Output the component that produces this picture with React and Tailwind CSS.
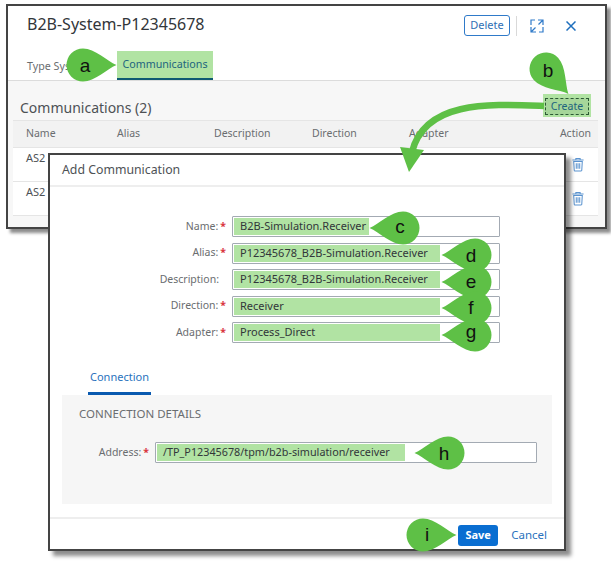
const FONT = { fontFamily: '"Noto Sans", "Open Sans", sans-serif' };

const fields = [
  { label: 'Name:', value: 'B2B-Simulation.Receiver', mark: 'w-[135px]', required: true },
  { label: 'Alias:', value: 'P12345678_B2B-Simulation.Receiver', mark: 'w-[206px]', required: true },
  { label: 'Description:', value: 'P12345678_B2B-Simulation.Receiver', mark: 'w-[206px]', required: false },
  { label: 'Direction:', value: 'Receiver', mark: 'w-[206px]', required: true },
  { label: 'Adapter:', value: 'Process_Direct', mark: 'w-[206px]', required: true },
];

// callout teardrops, tip points at local -x before rotating
const callouts = [
  { letter: 'a', x: 83, y: 65, r: 180, tx: 85, ty: 72 },
  { letter: 'b', x: 546, y: 69, r: -132, tx: 548, ty: 77 },
  { letter: 'c', x: 403, y: 228, r: 0, tx: 400, ty: 233 },
  { letter: 'd', x: 475, y: 255, r: 0, tx: 471, ty: 262 },
  { letter: 'e', x: 475, y: 282, r: 0, tx: 471, ty: 288 },
  { letter: 'f', x: 475, y: 308, r: 0, tx: 471, ty: 314 },
  { letter: 'g', x: 475, y: 335, r: 0, tx: 471, ty: 338 },
  { letter: 'h', x: 448, y: 453, r: 0, tx: 444, ty: 460 },
  { letter: 'i', x: 423, y: 535, r: 180, tx: 427, ty: 541 },
];

function TrashIcon() {
  return (
    <svg width="12" height="15" viewBox="0 0 14 16" fill="none" stroke="#5b93cf" strokeWidth="1.2">
      <path d="M0.5 2.8h13M4.5 2.5V1h5v1.5" />
      <path d="M2 4.5h10l-.6 10.2a.8.8 0 0 1-.8.8H3.4a.8.8 0 0 1-.8-.8z" />
      <path d="M5 6.5v6.5M7 6.5v6.5M9 6.5v6.5" />
    </svg>
  );
}

function FullscreenIcon() {
  return (
    <svg width="14" height="14" viewBox="0 0 14 14" fill="none" stroke="#2f7ac9" strokeWidth="1.2">
      <path d="M5 1H1v5M9 13h4V8" />
      <path d="M8 1h5v5M13 1L8.5 5.5M1 8v5h5M1 13l4.5-4.5" />
    </svg>
  );
}

function Annotations() {
  return (
    <svg className="absolute left-0 top-0 pointer-events-none" width="611" height="564" viewBox="0 0 611 564">
      <path d="M544 106C490 104 425 100 412 152" fill="none" stroke="#5ec046" strokeWidth="6.5" />
      <path d="M400 147L424 150L409 172Z" fill="#5ec046" />
      {callouts.map(c => (
        <g key={c.letter}>
          <path
            transform={`translate(${c.x} ${c.y}) rotate(${c.r})`}
            d="M-33.5 0C-24-4-12-16.5 0-16.5A16.5 16.5 0 1 1 0 16.5C-12 16.5-24 4-33.5 0Z"
            fill="#5ec046"
          />
          <text x={c.tx} y={c.ty} textAnchor="middle" fontSize="19" fill="#111" fontFamily="Liberation Sans, sans-serif">{c.letter}</text>
        </g>
      ))}
    </svg>
  );
}

function BackWindow() {
  return (
    <div className="absolute left-[6px] top-[4px] w-[601px] h-[225px] border-2 border-[#444] bg-white flex flex-col shadow-[4px_4px_3px_rgba(0,0,0,0.45)]">
      <div className="h-[75px] shrink-0 flex flex-col border-b border-[#dcdcdc]">
        <div className="h-[40px] pl-[19px] pr-[29px] flex items-center justify-between">
          <span className="text-[16px] text-[#32363a] mb-[4px]">B2B-System-P12345678</span>
          <div className="flex items-center mb-[1px]">
            <button className="w-[46px] h-[21px] border border-[#2f7ac9] rounded-[3px] text-[11px] text-[#2f6fb5]">Delete</button>
            <div className="w-px h-[20px] bg-[#d9d9d9] ml-[6px] mr-[13px]" />
            <FullscreenIcon />
            <span className="ml-[22px] text-[#1f6fbd]">
              <svg width="10" height="10" viewBox="0 0 10 10" fill="none" stroke="currentColor" strokeWidth="1.5"><path d="M0.5 0.5l9 9M9.5 0.5l-9 9" /></svg>
            </span>
          </div>
        </div>
        <div className="flex-1 flex items-end pl-[19px] text-[10.7px]">
          <span className="text-[#6a6d70] h-[28px] w-[90px] pt-[6px]">Type Systems</span>
          <div className="w-[96px] h-[29px] bg-[#b1e3a3] flex justify-center pt-[5px] border-b-2 border-[#0f5a72] text-[#21637e]">
            Communications
          </div>
        </div>
      </div>
      <div className="flex-1 bg-[#f7f7f7] pl-[5px] pr-[7px] flex flex-col">
        <div className="h-[39px] flex items-end justify-between">
          <span className="pl-[7px] pb-[2px] text-[14px] text-[#4d5155]">Communications (2)</span>
          <div className="w-[48px] h-[23px] mb-[3px] mr-[7px] bg-[#b1e3a3] p-[2px] pt-[4px]">
            <div className="h-full border border-dashed border-[#2c5a35] bg-[#a6d69a] flex items-center justify-center text-[10.5px] text-[#21637e]">Create</div>
          </div>
        </div>
        <div className="h-[28px] bg-[#f2f2f2] border-y border-[#e5e5e5] grid grid-cols-[91px_97px_98px_97px_1fr_auto] items-center pl-[13px] pr-[7px] text-[10.5px] text-[#6a6d70]">
          <span>Name</span><span>Alias</span><span>Description</span><span>Direction</span><span>Adapter</span><span>Action</span>
        </div>
        {[0, 1].map(i => (
          <div key={i} className="h-[34px] bg-white border-b border-[#e5e5e5] flex justify-between pl-[13px] pr-[14px] text-[11px] text-[#4d5155]">
            <span className="pt-[2px]">AS2</span>
            <span className="pt-[9px]"><TrashIcon /></span>
          </div>
        ))}
      </div>
    </div>
  );
}

function FrontWindow() {
  return (
    <div className="absolute left-[48px] top-[153px] w-[518px] h-[398px] border-2 border-[#444] bg-white flex flex-col shadow-[5px_5px_4px_rgba(0,0,0,0.45)]">
      <div className="h-[32px] shrink-0 pl-[12px] flex items-center border-b-2 border-[#eeeeee] text-[12.3px] text-[#4d5155]">Add Communication</div>

      <div className="pt-[29px] flex flex-col gap-[5.5px] text-[11px]">
        {fields.map(f => (
          <div key={f.label} className="h-[21px] flex items-center">
            <div className={`w-[176px] text-[10.5px] text-[#6a6d70] text-right ${f.required ? '' : 'pr-[7px]'}`}>
              {f.label}
              {f.required && <span className="text-[#d9363e] ml-[2px] font-bold">*</span>}
            </div>
            <div className="ml-[6px] w-[268px] h-full border border-[#a3aab3] rounded-[1px] bg-white p-[1px] text-[#32363a]">
              <div className={`h-full ${f.mark} bg-[#b1e3a3] pl-[6px] flex items-center`}>{f.value}</div>
            </div>
          </div>
        ))}
      </div>

      <div className="mt-[19px] px-[12px]">
        <div className="h-[33px] pl-[26px] flex">
          <div className="w-[63px] h-[33px] border-b-[3px] border-[#0a5ab0] flex justify-center pt-[7px] text-[11px] text-[#2a72bd]">Connection</div>
        </div>
        <div className="h-[109px] bg-[#f6f6f6] pl-[17px] pr-[15px] pt-[11px] text-[10.5px]">
          <div className="text-[11.5px] text-[#6a6d70] leading-[16px]">CONNECTION DETAILS</div>
          <div className="mt-[20px] h-[21px] flex items-center">
            <div className="w-[70px] text-right text-[#6a6d70]">
              Address:<span className="text-[#d9363e] ml-[2px] font-bold">*</span>
            </div>
            <div className="ml-[6px] w-[382px] h-full border border-[#a3aab3] rounded-[1px] bg-white p-[1px] text-[10.8px] text-[#32363a]">
              <div className="h-full w-[248px] bg-[#b1e3a3] pl-[6px] flex items-center">/TP_P12345678/tpm/b2b-simulation/receiver</div>
            </div>
          </div>
        </div>
      </div>

      <div className="mt-[13px] flex-1 border-t-2 border-[#eeeeee] flex items-center justify-end pt-[2px] pr-[17px] text-[11.5px]">
        <button className="w-[40px] h-[21px] rounded-[3px] bg-[#0a6ed1] text-white font-bold text-[11px]">Save</button>
        <span className="ml-[13px] text-[#2a72bd]">Cancel</span>
      </div>
    </div>
  );
}

export default function App() {
  return (
    <div className="relative w-[611px] h-[564px] bg-white overflow-hidden" style={FONT}>
      <BackWindow />
      <FrontWindow />
      <Annotations />
    </div>
  );
}
